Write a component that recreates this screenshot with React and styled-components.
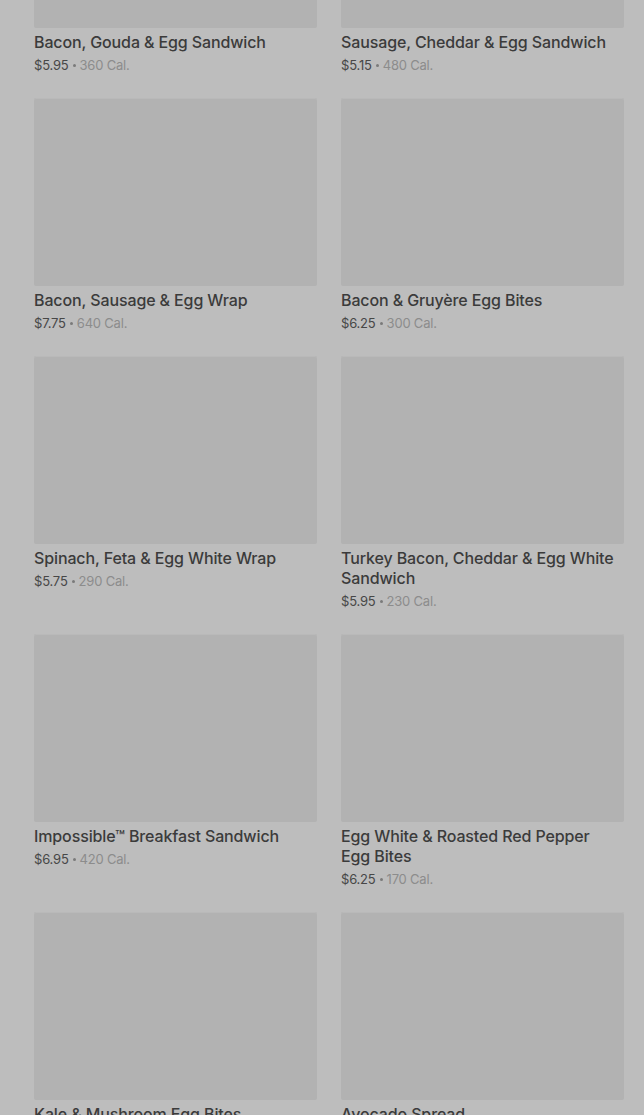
import React from "react";
import styled, { createGlobalStyle } from "styled-components";

const Global = createGlobalStyle`
  html, body { margin: 0; padding: 0; background: #bdbdbd; }
  body { font-family: Inter, "Noto Sans", sans-serif; overflow: hidden; }
`;

const Page = styled.div`
  height: 1115px;
  overflow: hidden;
  background: #bdbdbd;
`;

const Grid = styled.div`
  display: grid;
  grid-template-columns: 283px 283px;
  column-gap: 24px;
  row-gap: 24px;
  padding: 0 20px 0 34px;
  margin-top: -160px;
`;

const Card = styled.div`
  display: flex;
  flex-direction: column;
`;

const Thumb = styled.div`
  height: 188px;
  background: #b2b2b2;
  border-radius: 2px;
  box-shadow: inset 0 1px 0 #b9b9b9;
`;

const Title = styled.div`
  margin-top: 4px;
  padding-right: 8px;
  font-size: 16px;
  line-height: 20px;
  font-weight: 500;
  color: #3b3b3b;
  letter-spacing: -0.12px;
`;

const Meta = styled.div`
  margin-top: 4px;
  height: 18px;
  font-size: 13px;
  line-height: 18px;
  color: #474747;
  letter-spacing: -0.2px;
`;

const Dot = styled.span`
  display: inline-block;
  width: 3px;
  height: 3px;
  border-radius: 50%;
  background: #7a7a7a;
  margin: 0 4px;
  vertical-align: 3px;
`;

const Cal = styled.span`
  color: #8c8c8c;
`;

const items = [
  ["Bacon, Gouda & Egg Sandwich", "$5.95", "360 Cal."],
  ["Sausage, Cheddar & Egg Sandwich", "$5.15", "480 Cal."],
  ["Bacon, Sausage & Egg Wrap", "$7.75", "640 Cal."],
  ["Bacon & Gruyère Egg Bites", "$6.25", "300 Cal."],
  ["Spinach, Feta & Egg White Wrap", "$5.75", "290 Cal."],
  ["Turkey Bacon, Cheddar & Egg White Sandwich", "$5.95", "230 Cal."],
  ["Impossible™ Breakfast Sandwich", "$6.95", "420 Cal."],
  ["Egg White & Roasted Red Pepper Egg Bites", "$6.25", "170 Cal."],
  ["Kale & Mushroom Egg Bites", "$6.25", "230 Cal."],
  ["Avocado Spread", "$1.25", "90 Cal."],
];

export default function App() {
  return (
    <Page>
      <Global />
      <Grid>
        {items.map(([name, price, cal]) => (
          <Card key={name}>
            <Thumb />
            <Title>{name}</Title>
            <Meta>
              {price}
              <Dot />
              <Cal>{cal}</Cal>
            </Meta>
          </Card>
        ))}
      </Grid>
    </Page>
  );
}
